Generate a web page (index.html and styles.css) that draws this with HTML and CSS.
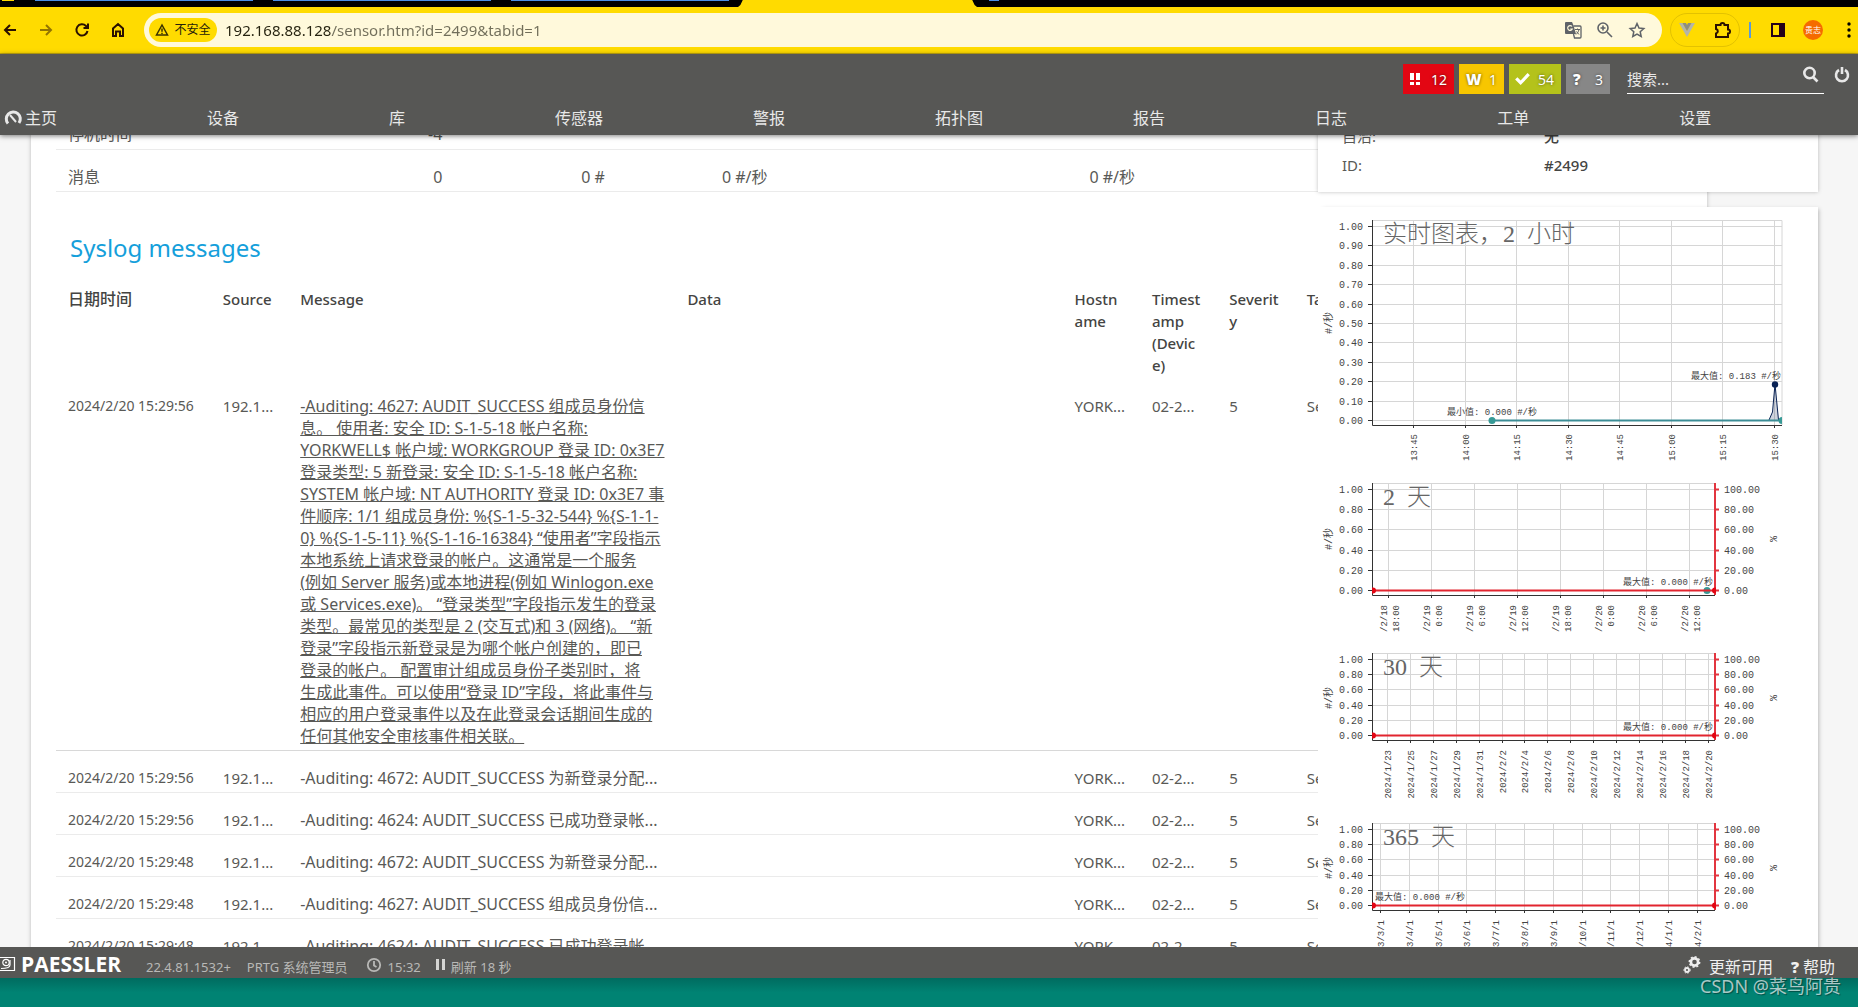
FILE: index.html
```html
<!DOCTYPE html>
<html lang="zh-CN">
<head>
<meta charset="utf-8">
<title>Syslog | PRTG</title>
<link rel="stylesheet" href="styles.css">
</head>
<body>
<div class="tabstrip"><span class="tab-active"></span>
  <i class="tab-line tab-home"></i><i class="tab-line tab-1"></i><i class="tab-line tab-2"></i><i class="tab-line tab-3"></i><i class="tab-line tab-4"></i>
</div>
<div class="toolbar">
  <button class="tool" aria-label="后退"><svg width="16" height="16" viewBox="0 0 16 16"><path d="M14 8H3M8 3L3 8l5 5" /></svg></button>
  <button class="tool faded" aria-label="前进"><svg width="16" height="16" viewBox="0 0 16 16"><path d="M2 8h11M8 3l5 5-5 5" /></svg></button>
  <button class="tool" aria-label="刷新"><svg width="16" height="16" viewBox="0 0 16 16"><path d="M13.500 9A5.600 5.600 0 1 1 12 4l1.500 1.500M14 1.500V6H9.500" /></svg></button>
  <button class="tool" aria-label="主页"><svg width="16" height="16" viewBox="0 0 16 16"><path d="M3 14V6.500L8 2l5 4.500V14h-3V9.500H6V14z" /></svg></button>
  <form class="address">
    <button type="button" class="chip"><svg width="14" height="14" viewBox="0 0 14 14"><path d="M7 2L1.500 12h11zM7 5.500v3.300M7 9.800v1.200" /></svg>不安全</button>
    <input class="url" type="text" aria-label="地址" value="192.168.88.128/sensor.htm?id=2499&amp;tabid=1">
    <button type="button" class="addr-btn" aria-label="翻译"><svg width="18" height="18" viewBox="0 0 18 18"><path d="M2 1h6l1.500 3.500L12 13H2a1 1 0 0 1-1-1V2a1 1 0 0 1 1-1z" fill="#5f6368"/><path d="M9.500 5H16a1 1 0 0 1 1 1v10a1 1 0 0 1-1 1h-5.500l-1-4" fill="none" stroke="#5f6368" stroke-width="1.300"/><path d="M8 5.500A2.400 2.400 0 1 0 8.300 8H6.300" fill="none" stroke="#fff9db" stroke-width="1.200"/><path d="M11 8.500h5M13.500 7.500v1M15 8.500c-.5 2.500-2 4-3 5M12.500 10.500l2.500 3" fill="none" stroke="#5f6368"/></svg></button>
    <button type="button" class="addr-btn" aria-label="缩放"><svg width="18" height="18" viewBox="0 0 18 18"><path d="M11 11l5 5M7 4.500v5M4.500 7h5" fill="none" stroke="#5f6368" stroke-width="1.600"/><circle cx="7" cy="7" r="5" fill="none" stroke="#5f6368" stroke-width="1.600"/></svg></button>
    <button type="button" class="addr-btn" aria-label="收藏"><svg width="18" height="18" viewBox="0 0 18 18"><path d="M9 2.500l2 4.500 4.800.5-3.600 3.200 1 4.800L9 13l-4.200 2.500 1-4.800L2.200 7.500 7 7z" fill="none" stroke="#5f6368" stroke-width="1.500"/></svg></button>
  </form>
  <div class="extensions">
    <button class="addr-btn" aria-label="Vue"><svg width="18" height="16" viewBox="0 0 18 16"><path d="M1 1h3.500L9 9l4.500-8H17L9 15z" fill="#b5b5a8"/><path d="M4.500 1H8l1 2 1-2h3.500L9 9z" fill="#8d8d84"/></svg></button>
    <button class="addr-btn" aria-label="扩展程序"><svg width="18" height="18" viewBox="0 0 18 18"><path d="M2 4h4.500a2 2 0 0 1 4 0H14v4.500a2 2 0 0 1 0 4V16H2v-3.500a2.300 2.300 0 0 0 0-4.500z" fill="none" stroke="#2a1000" stroke-width="2"/></svg></button>
  </div>
  <span class="sep"></span>
  <button class="addr-btn panel-btn" aria-label="侧边栏"><svg width="16" height="16" viewBox="0 0 16 16"><path d="M2 2h12v12H2z" fill="none" stroke="#24001a" stroke-width="2"/><path d="M9 2h5v12H9z" fill="#24001a"/></svg></button>
  <button class="avatar">贵志</button>
  <button class="addr-btn dots" aria-label="更多"><svg width="4" height="18" viewBox="0 0 4 18"><circle cx="2" cy="3" r="1.700"/><circle cx="2" cy="9" r="1.700"/><circle cx="2" cy="15" r="1.700"/></svg></button>
</div>

<header class="header">
  <div class="header-top">
    <a class="badge red" href="#"><svg width="10" height="12" viewBox="0 0 10 12"><path d="M0 0h4v7H0zM6 0h4v7H6zM0 9h4v3H0zM6 9h4v3H6z"/></svg>12</a>
    <a class="badge yellow" href="#"><b>W</b>1</a>
    <a class="badge green" href="#"><svg width="15" height="12" viewBox="0 0 16 13"><path d="M0 7l2.500-2.500L6 8l7.500-8L16 2.500 6 13z"/></svg>54</a>
    <a class="badge gray" href="#"><b>?</b>3</a>
    <form class="search">
      <input type="text" aria-label="搜索" placeholder="搜索...">
      <button type="button" aria-label="搜索"><svg width="18" height="18" viewBox="0 0 18 18"><circle cx="7.500" cy="7" r="5.200"/><path d="M11 11l4.500 4.500"/></svg></button>
    </form>
    <a class="power" href="#" aria-label="退出"><svg width="16" height="18" viewBox="0 0 16 18"><path d="M5 4a6 6 0 1 0 6 0M8 1v7"/></svg></a>
  </div>
  <nav class="nav">
    <a href="#"><svg width="19" height="16" viewBox="0 0 19 16"><path d="M4 13.500A7 7 0 1 1 15 13" fill="none" stroke="#e8e8e8" stroke-width="3"/><path d="M6 5l6 7" stroke="#e8e8e8" stroke-width="2"/></svg>主页</a>
    <a href="#">设备</a><a href="#">库</a><a href="#">传感器</a><a href="#">警报</a><a href="#">拓扑图</a><a href="#">报告</a><a href="#">日志</a><a href="#">工单</a><a href="#">设置</a>
  </nav>
</header>

<main class="main">
  <section class="card">
    <table class="channels">
      <colgroup><col class="c-name"><col class="c-num"><col class="c-num"><col class="c-wide"><col></colgroup>
      <tr><td>停机时间<span class="id">-4</span></td><td></td><td></td><td></td><td></td></tr>
      <tr><td>消息<span class="id">0</span></td><td>0 #</td><td>0 #/秒</td><td>0 #/秒</td><td></td></tr>
    </table>
    <h2>Syslog messages</h2>
    <table class="syslog">
      <colgroup><col class="u2"><col class="u1"><col class="u5"><col class="u5"><col class="u1"><col class="u1"><col class="u1"><col class="u5"></colgroup>
      <thead><tr><th>日期时间</th><th>Source</th><th>Message</th><th>Data</th><th>Hostn<br>ame</th><th>Timest<br>amp<br>(Devic<br>e)</th><th>Severit<br>y</th><th>Tag</th></tr></thead>
      <tbody>
      <tr class="open"><td>2024/2/20 15:29:56</td><td>192.1...</td><td><a href="#">-Auditing: 4627: AUDIT_SUCCESS 组成员身份信<br>息。 使用者: 安全 ID: S-1-5-18 帐户名称:<br>YORKWELL$ 帐户域: WORKGROUP 登录 ID: 0x3E7<br>登录类型: 5 新登录: 安全 ID: S-1-5-18 帐户名称:<br>SYSTEM 帐户域: NT AUTHORITY 登录 ID: 0x3E7 事<br>件顺序: 1/1 组成员身份: %{S-1-5-32-544} %{S-1-1-<br>0} %{S-1-5-11} %{S-1-16-16384} “使用者”字段指示<br>本地系统上请求登录的帐户。这通常是一个服务<br>(例如 Server 服务)或本地进程(例如 Winlogon.exe<br>或 Services.exe)。 “登录类型”字段指示发生的登录<br>类型。最常见的类型是 2 (交互式)和 3 (网络)。 “新<br>登录”字段指示新登录是为哪个帐户创建的，即已<br>登录的帐户。 配置审计组成员身份子类别时，将<br>生成此事件。可以使用“登录 ID”字段，将此事件与<br>相应的用户登录事件以及在此登录会话期间生成的<br>任何其他安全审核事件相关联。</a></td><td></td><td>YORK...</td><td>02-2...</td><td>5</td><td>Security</td></tr>
      <tr><td>2024/2/20 15:29:56</td><td>192.1...</td><td>-Auditing: 4672: AUDIT_SUCCESS 为新登录分配...</td><td></td><td>YORK...</td><td>02-2...</td><td>5</td><td>Security</td></tr>
      <tr><td>2024/2/20 15:29:56</td><td>192.1...</td><td>-Auditing: 4624: AUDIT_SUCCESS 已成功登录帐...</td><td></td><td>YORK...</td><td>02-2...</td><td>5</td><td>Security</td></tr>
      <tr><td>2024/2/20 15:29:48</td><td>192.1...</td><td>-Auditing: 4672: AUDIT_SUCCESS 为新登录分配...</td><td></td><td>YORK...</td><td>02-2...</td><td>5</td><td>Security</td></tr>
      <tr><td>2024/2/20 15:29:48</td><td>192.1...</td><td>-Auditing: 4627: AUDIT_SUCCESS 组成员身份信...</td><td></td><td>YORK...</td><td>02-2...</td><td>5</td><td>Security</td></tr>
      <tr><td>2024/2/20 15:29:48</td><td>192.1...</td><td>-Auditing: 4624: AUDIT_SUCCESS 已成功登录帐...</td><td></td><td>YORK...</td><td>02-2...</td><td>5</td><td>Security</td></tr>
      </tbody>
    </table>
  </section>
  <aside class="side">
    <dl class="facts"><dt>自治:</dt><dd>无</dd><dt>ID:</dt><dd>#2499</dd></dl>
    <div class="charts">
      <svg id="chart-live" width="500" height="263" role="img" aria-label="实时图表"></svg>
      <svg id="chart-2d" width="500" height="170" role="img" aria-label="2 天"></svg>
      <svg id="chart-30d" width="500" height="170" role="img" aria-label="30 天"></svg>
      <svg id="chart-365d" width="500" height="170" role="img" aria-label="365 天"></svg>
    </div>
  </aside>
</main>

<footer class="footer">
  <a class="brand" href="#"><svg width="16" height="16" viewBox="0 0 16 16"><path d="M0 1.500h14.500v13H0M10 4v5c0 2.500-3 3.500-9 3.500" fill="none" stroke="#fff" stroke-width="1.200"/><circle cx="6" cy="6.500" r="3.200" fill="none" stroke="#fff" stroke-width="1.200"/><circle cx="6" cy="6.500" r="1" fill="#fff"/></svg>PAESSLER</a>
  <span>22.4.81.1532+</span>
  <a class="user" href="#">PRTG 系统管理员</a>
  <span class="clock"><svg width="16" height="16" viewBox="0 0 16 16"><circle cx="8" cy="8" r="6.200"/><path d="M8 4v4.500l2.500 1.500"/></svg>15:32</span>
  <button class="refresh"><svg width="9" height="11" viewBox="0 0 9 11"><path d="M0 0h3v11H0zM6 0h3v11H6z" fill="#d5d5d3"/></svg>刷新 18 秒</button>
  <a class="update" href="#"><svg width="18" height="18" viewBox="0 0 18 18"><circle cx="11.500" cy="6" r="3.600" fill="none" stroke="#eee" stroke-width="2.600"/><circle cx="11.500" cy="6" r="5.200" fill="none" stroke="#eee" stroke-width="1.500" stroke-dasharray="2 2"/><circle cx="4" cy="14" r="2" fill="none" stroke="#eee" stroke-width="1.800"/><circle cx="4" cy="14" r="3.200" fill="none" stroke="#eee" stroke-dasharray="1.500 1.500"/></svg>更新可用</a>
  <a class="help" href="#"><b>?</b>帮助</a>
</footer>
<div class="desktop"></div>
<div class="watermark">CSDN @菜鸟阿贵</div>
<script src="charts.js"></script>
</body>
</html>
```
FILE: styles.css
```css
* { box-sizing: border-box; }
body {
  margin: 0; height: 100vh; display: flex; flex-direction: column; overflow: hidden; position: relative;
  font: 15px/22px "Noto Sans", "Noto Sans CJK SC", sans-serif; color: #595956; background: #f6f6f6;
}
a { color: inherit; text-decoration: none; }
button { border: 0; padding: 0; background: none; font: inherit; color: inherit; display: flex; align-items: center; justify-content: center; }
svg { display: block; flex: none; }

.tabstrip { flex: none; height: 7px; background: #000; position: relative; }
.tab-active { position: absolute; left: 738px; width: 239px; height: 7px; background: #ffdb00; clip-path: polygon(2% 0, 98% 0, 99% 70%, 100% 100%, 0 100%, 1% 70%); }
.tab-line { position: absolute; top: 0; height: 1px; background: #4a90e8; }
.tab-home { left: 2px; width: 12px; background: #ffdb00; }
.tab-1 { left: 35px; width: 218px; }
.tab-2 { left: 273px; width: 218px; }
.tab-3 { left: 511px; width: 218px; }
.tab-4 { left: 989px; width: 10px; }

.toolbar { flex: none; height: 47px; display: flex; align-items: center; background: #ffdb00; border-bottom: 1px solid #c9ad10; padding: 0 7px 0 2px; }
.tool { width: 16px; height: 16px; margin-right: 20px; }
.tool path { fill: none; stroke: #2a1000; stroke-width: 2; }
.faded { opacity: .5; }
.address { flex: 1; height: 34px; border-radius: 17px; background: #fff9db; display: flex; align-items: center; padding: 0 16px 0 5px; gap: 14px; margin-left: -2px; }
.chip { height: 24px; width: 68px; border-radius: 12px; background: #ffdb00; font-size: 12px; color: #24200a; gap: 5px; }
.chip path { fill: none; stroke: #3a3200; stroke-width: 1.5px; }
.url {
  flex: 1; min-width: 0; height: 24px; border: 0; padding: 0; margin-left: -6px; outline: 0; font: 15px "Noto Sans", sans-serif;
  color: transparent; background: linear-gradient(90deg, #25220f 107px, #716e5a 107px); background-clip: text; -webkit-background-clip: text;
}
.addr-btn { width: 18px; height: 18px; }
.extensions { width: 70px; height: 34px; margin-left: 8px; border: 1px solid #e3c200; border-radius: 17px; display: flex; align-items: center; justify-content: space-between; padding: 0 7px; }
.sep { width: 2px; height: 16px; background: #5a9ad8; margin: 0 18px 0 9px; }
.avatar { width: 20px; height: 20px; border-radius: 10px; background: #f56b00; color: #fff; font-size: 8px; line-height: 20px; margin: 0 24px 0 16px; }
.dots { width: 4px; }

.header { flex: none; height: 81px; background: #575755; color: #e8e8e8; box-shadow: 0 1px 5px rgba(0,0,0,.5); position: relative; z-index: 3; display: flex; flex-direction: column; justify-content: space-between; padding: 10px 8px 5px 4px; }
.header-top { display: flex; justify-content: flex-end; gap: 5px; height: 30px; }
.badge { display: flex; align-items: center; justify-content: space-between; height: 30px; padding: 3px 7px 1px; color: #fff; font-size: 14px; text-shadow: 0 0 3px rgba(0,0,0,.6); }
.badge svg { fill: #fff; margin-bottom: 3px; }
.badge b { font: 900 15px/20px "Noto Sans", sans-serif; margin-bottom: 3px; }
.red { width: 51px; background: #e30613; }
.yellow { width: 45px; background: #f7c600; }
.green { width: 52px; background: #b4c21b; padding: 3px 7px 1px 6px; }
.gray { width: 44px; background: #878787; }
.search { display: flex; width: 197px; margin: 0 5px 0 12px; border-bottom: 1px solid #fff; }
.search input { flex: 1; min-width: 0; border: 0; outline: 0; background: none; font: inherit; color: #e8e8e8; padding: 1px 0 0; }
.search input::placeholder { color: #e8e8e8; opacity: 1; }
.search button { width: 18px; height: 22px; margin-right: 4px; }
.search circle, .search path, .power path { fill: none; stroke: #e8e8e8; stroke-width: 2.6px; }
.power { padding-top: 2px; }
.nav { display: flex; gap: 150px; font-size: 16px; line-height: 24px; white-space: nowrap; }
.nav a { display: flex; align-items: center; gap: 2px; }

.main { flex: 1; min-height: 0; overflow: hidden; position: relative; }
.card { margin: -28px 151px 0 31px; padding: 0 25px; background: #fff; box-shadow: 0 0 4px rgba(0,0,0,.25); min-height: 100%; }
table { width: 100%; table-layout: fixed; border-collapse: collapse; }
td, th { padding: 16px 12px 3px; text-align: left; vertical-align: top; white-space: nowrap; overflow: hidden; }
td { border-bottom: 1px solid #ebebeb; line-height: 22px; }
th { font-weight: 500; color: #444442; }
th:first-child { font-size: 16px; }
.channels td { text-align: right; height: 42px; font-size: 16px; }
.channels td:first-child { text-align: left; }
.id { float: right; }
.c-name { width: 24.5%; }
.c-num { width: 10%; }
.c-wide { width: 22.6%; }
.u1 { width: 4.76%; }
.u2 { width: 9.52%; }
.u5 { width: 23.81%; }
h2 { margin: 38px 14px 6px; font-size: 24px; line-height: 36px; font-weight: 400; color: #159fdb; }
.syslog td:first-child { font-size: 14px; }
.syslog td:nth-child(3) { font-size: 16px; }
.syslog .open td { border-color: #d8d8d8; }
.open a { text-decoration: underline; }

.side { position: absolute; right: 40px; top: 0; width: 500px; }
.facts, .charts { background: #fff; box-shadow: 0 0 4px rgba(0,0,0,.25); }
.facts { margin: -16px 0 15px; padding: 6px 24px 16px; display: grid; grid-template-columns: 202px 1fr; row-gap: 7px; height: 73px; }
.facts dt, .facts dd { margin: 0; }
.facts dd { font-weight: 500; color: #444442; }
.charts { box-shadow: 3px 0 4px -2px rgba(0,0,0,.25); }
.charts text { fill: #444; font: 10px "Liberation Mono", "Noto Sans CJK SC", monospace; }
.charts .note, .charts .date { font-size: 9px; }
.charts .title { font: 300 24px "Liberation Serif", "Noto Sans CJK SC", serif; fill: #666; white-space: pre; }
.grid { fill: none; stroke: #d6d6d6; }
.axis { fill: none; stroke: #333; }
.axis-red { fill: none; stroke: #e2353f; stroke-width: 2px; }
.zero-red { stroke: #e2252f; stroke-width: 2px; }
.dot-red { fill: #e30613; }
.dot-teal { fill: #379a96; }
.dot-navy { fill: #0a2355; }
.zero-teal { stroke: #3c8d96; stroke-width: 2px; }
.spike { fill: rgba(10,35,85,.2); stroke: #0a2355; }

.footer { flex: none; height: 31px; background: #575755; color: #b9b9b7; display: flex; align-items: center; font-size: 13px; padding: 8px 23px 0 0; position: relative; z-index: 2; white-space: nowrap; }
.footer svg { margin-bottom: 4px; }
.brand { display: flex; align-items: center; gap: 5px; width: 146px; font: bold 21px/22px "Open Sans", sans-serif; color: #fff; margin-top: -6px; }
.footer .brand svg { margin: 0; }
.user { margin-left: 16px; }
.clock { display: flex; align-items: center; gap: 6px; margin-left: 18px; }
.clock circle, .clock path { fill: none; stroke: #b9b9b7; stroke-width: 1.800px; }
.refresh { gap: 6px; margin-left: 15px; }
.update { display: flex; align-items: center; gap: 8px; margin-left: auto; font-size: 16px; color: #f0f0f0; }
.help { margin-left: 18px; font-size: 16px; color: #f0f0f0; }
.help b { font-weight: 900; margin-right: 4px; }
.desktop { flex: none; height: 29px; background: linear-gradient(#006b5f, #008373 50%); }
.watermark { position: absolute; z-index: 4; right: 17px; bottom: 9px; font-size: 18px; line-height: 24px; color: rgba(225,235,235,.75); text-shadow: 1px 1px 1px rgba(0,0,0,.4); }
```
FILE: charts.js
```js
(function () {
  var NS = 'http://www.w3.org/2000/svg';
  function add(svg, tag, attrs, text) {
    var el = document.createElementNS(NS, tag);
    for (var k in attrs) el.setAttribute(k, attrs[k]);
    if (text !== undefined) el.textContent = text;
    svg.appendChild(el);
  }
  function upright(svg, x, y, text, anchor, cls) {
    add(svg, 'text', { 'class': cls || '', transform: 'translate(' + x + ' ' + y + ') rotate(-90)', 'text-anchor': anchor }, text);
  }
  function draw(id, o) {
    var svg = document.getElementById(id), left = 54, top = 13;
    var grid = '', ticks = '', redTicks = '', i, y, x;
    var labelTop = o.bottom + (o.live ? 9 : 10);
    for (i = 0; i <= o.steps; i++) {
      y = Math.round(19 + (o.zero - 19) * i / o.steps) + 0.5;
      grid += 'M' + left + ' ' + y + 'H' + o.right;
      ticks += 'M50 ' + y + 'h4';
      redTicks += 'M' + o.right + ' ' + y + 'h4';
      add(svg, 'text', { x: 45, y: y + 3.5, 'text-anchor': 'end' }, (1 - i / o.steps).toFixed(2));
      if (!o.live) add(svg, 'text', { x: 406, y: y + 3.5 }, (100 - 100 * i / o.steps).toFixed(2));
    }
    o.labels.forEach(function (label, n) {
      x = Math.round(o.first + o.pitch * n) + 0.5;
      grid += 'M' + x + ' ' + top + 'V' + o.bottom;
      ticks += 'M' + x + ' ' + o.bottom + 'v3';
      var lines = label.split(' ');
      if (lines.length === 2) {
        upright(svg, x - 2, labelTop, lines[0], 'end', 'date');
        upright(svg, x + 10, labelTop, lines[1], 'end', 'date');
      } else upright(svg, x + 3, labelTop, label, 'end', 'date');
    });
    grid += 'M' + left + ' 13.500H' + o.right + 'V' + o.bottom;
    add(svg, 'path', { 'class': 'grid', d: grid });
    add(svg, 'path', { 'class': 'axis', d: ticks + 'M54.500 13V' + (o.bottom + 0.5) + 'H' + o.right });
    upright(svg, 14, o.mid, '#/秒', 'middle');
    add(svg, 'text', { 'class': 'title', x: 65, y: 35 }, o.title);
    if (o.live) {
      add(svg, 'path', { 'class': 'spike', d: 'M451 213L454.500 205L457 177L460.500 213' });
      add(svg, 'path', { 'class': 'zero-teal', d: 'M174 213.500H464' });
      add(svg, 'circle', { 'class': 'dot-teal', cx: 174, cy: 213.5, r: 3.5 });
      add(svg, 'path', { 'class': 'dot-teal', d: 'M464 210a3.500 3.500 0 0 0 0 7z' });
      add(svg, 'circle', { 'class': 'dot-navy', cx: 457, cy: 177.5, r: 3.2 });
      add(svg, 'text', { 'class': 'note', x: 129, y: 208 }, '最小值: 0.000 #/秒');
      add(svg, 'text', { 'class': 'note', x: 373, y: 172 }, '最大值: 0.183 #/秒');
    } else {
      var z = o.zero + 0.5;
      add(svg, 'path', { 'class': 'axis-red', d: 'M397 13V' + o.bottom });
      add(svg, 'path', { 'class': 'axis-red', d: redTicks });
      if (o.teal) add(svg, 'circle', { 'class': 'dot-teal', cx: 389, cy: z, r: 3.5 });
      add(svg, 'path', { 'class': 'zero-red', d: 'M54 ' + z + 'H397' });
      add(svg, 'path', { 'class': 'dot-red', d: 'M54 ' + (z - 3) + 'h1a3 3 0 0 1 0 6h-1zM398 ' + (z - 3) + 'h-1a3 3 0 0 0 0 6h1z' });
      add(svg, 'text', { 'class': 'note', x: o.noteX, y: o.zero - 5 }, '最大值: 0.000 #/秒');
      upright(svg, 459, o.mid, '%', 'middle');
    }
  }
  draw('chart-live', { live: true, title: '实时图表，2  小时', steps: 10, right: 464, bottom: 218, zero: 213, mid: 116, first: 95, pitch: 51.5,
    labels: ['13:45', '14:00', '14:15', '14:30', '14:45', '15:00', '15:15', '15:30'] });
  draw('chart-2d', { title: '2  天', steps: 5, right: 397, bottom: 125, zero: 120, mid: 69, first: 70, pitch: 43, teal: true, noteX: 305,
    labels: ['/2/18 18:00', '/2/19 0:00', '/2/19 6:00', '/2/19 12:00', '/2/19 18:00', '/2/20 0:00', '/2/20 6:00', '/2/20 12:00'] });
  draw('chart-30d', { title: '30  天', steps: 5, right: 397, bottom: 100, zero: 95, mid: 58, first: 69, pitch: 22.9, noteX: 305,
    labels: ['1/23', '1/25', '1/27', '1/29', '1/31', '2/2', '2/4', '2/6', '2/8', '2/10', '2/12', '2/14', '2/16', '2/18', '2/20'].map(function (d) { return '2024/' + d; }) });
  draw('chart-365d', { title: '365  天', steps: 5, right: 397, bottom: 100, zero: 95, mid: 58, first: 62, pitch: 28.8, noteX: 57,
    labels: ['2023/3/1', '2023/4/1', '2023/5/1', '2023/6/1', '2023/7/1', '2023/8/1', '2023/9/1', '2023/10/1', '2023/11/1', '2023/12/1', '2024/1/1', '2024/2/1'] });
})();
```
